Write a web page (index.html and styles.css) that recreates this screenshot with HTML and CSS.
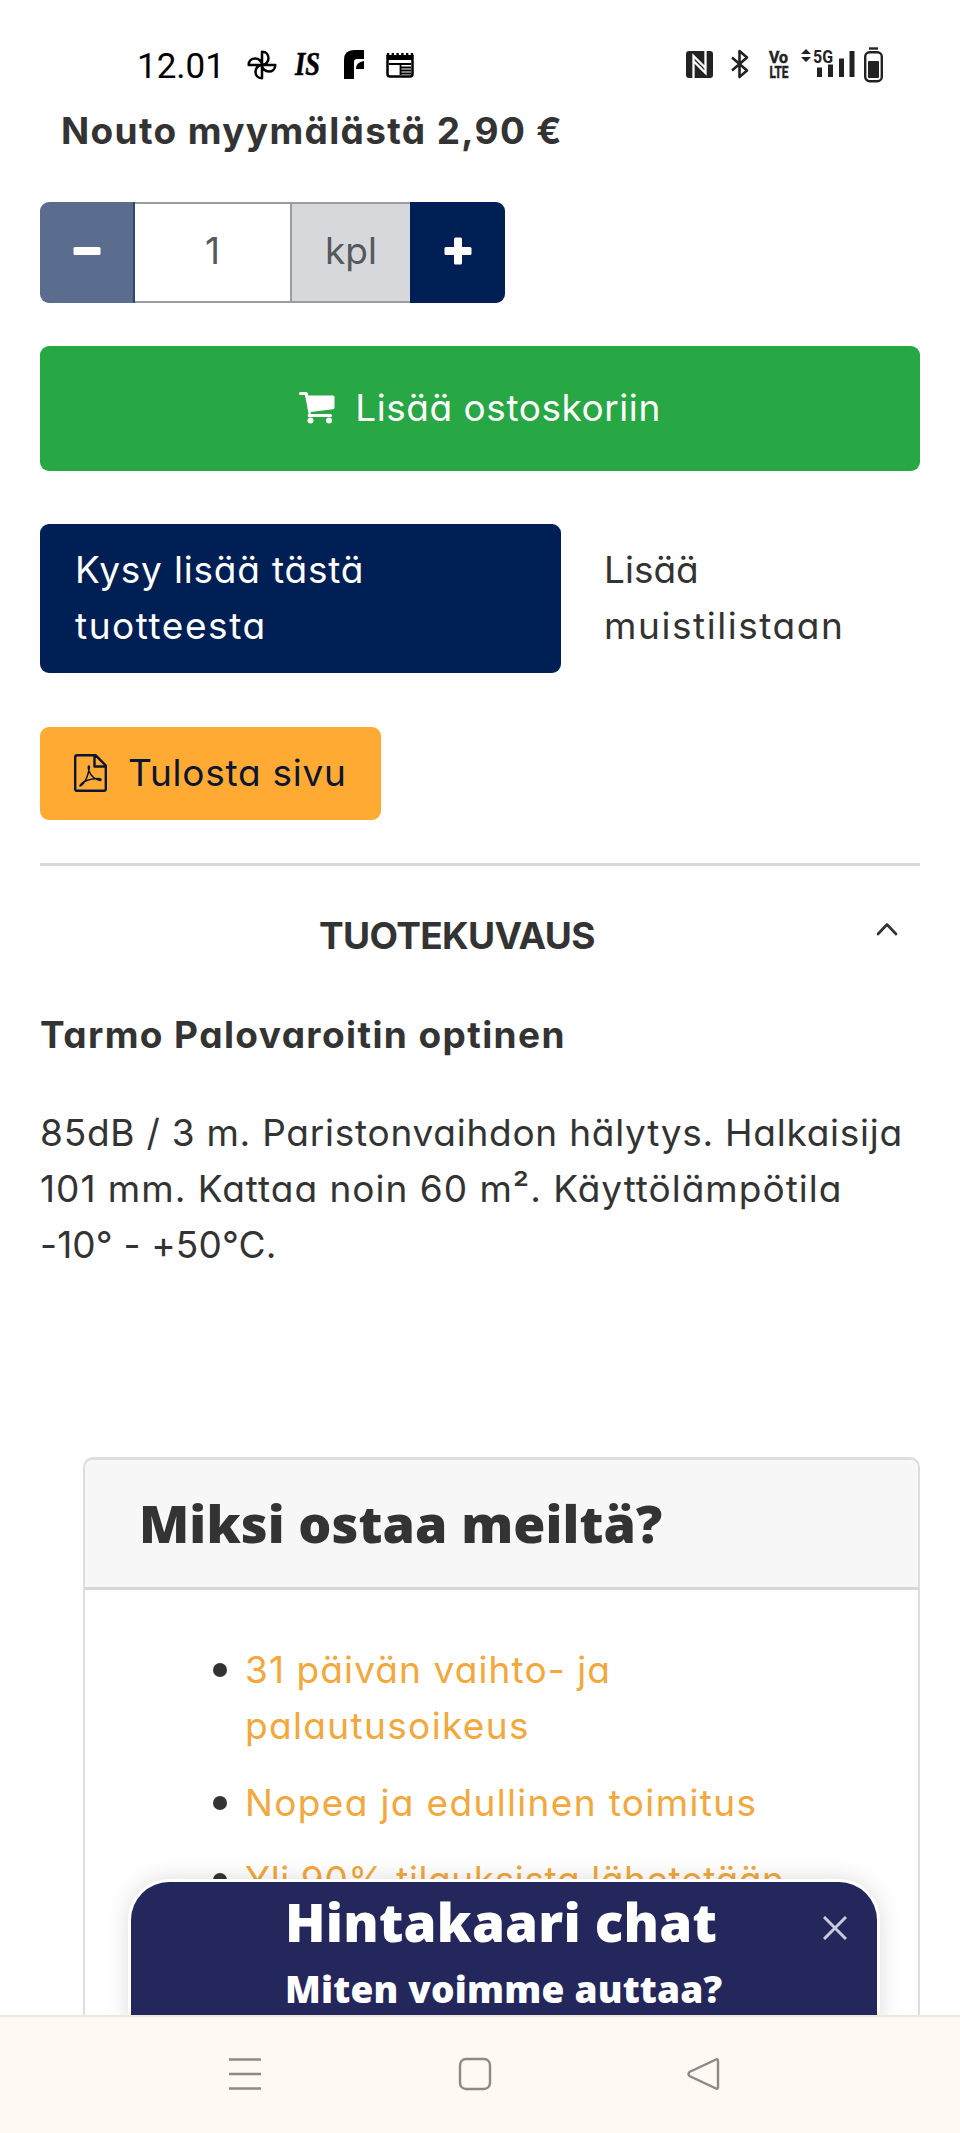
FILE: index.html
```html
<!DOCTYPE html>
<html lang="fi">
<head>
<meta charset="utf-8">
<title>Tarmo Palovaroitin optinen</title>
<link rel="stylesheet" href="styles.css">
</head>
<body>
<div class="screen">
  <header class="status">
    <span class="clock">12.01</span>
    <svg class="s-fan" width="30" height="30" viewBox="0 0 30 30" fill="none" stroke="#000" stroke-width="2.500" stroke-linejoin="round"><path d="M15 15V1.700C19.500 1.700 21.500 5 21.500 8.200C21.500 11.500 19 15 15 15ZM15 15H28.300C28.300 19.500 25 21.500 21.800 21.500C18.500 21.500 15 19 15 15ZM15 15V28.300C10.500 28.300 8.500 25 8.500 21.800C8.500 18.500 11 15 15 15ZM15 15H1.700C1.700 10.500 5 8.500 8.200 8.500C11.500 8.500 15 11 15 15Z"/></svg>
    <span class="s-is">IS</span>
    <svg class="s-f" width="20" height="29" viewBox="0 0 20 29"><path d="M0 29V10Q0 0 10 0H20V9H13Q10 9 10 12V29ZM12 19Q12 12 20 11V19Z"/></svg>
    <svg class="s-news" width="28" height="26" viewBox="0 0 28 26"><path d="M1.500 3V22Q1.500 24.500 4 24.500H24Q26.500 24.500 26.500 22V3" fill="none" stroke="#000" stroke-width="2.500"/><path d="M1 3H27V8H1Z"/><path d="M2 4V1M6.800 4V1M11.600 4V1M16.400 4V1M21.200 4V1M26 4V1" stroke="#000" stroke-width="2.400"/><path d="M3 12H25M14.500 12V23M14.500 15.500H25M14.500 18.500H25M14.500 21.500H25" stroke="#000" stroke-width="1.800"/></svg>
    <span class="spacer"></span>
    <svg class="s-nfc" width="27" height="27" viewBox="0 0 27 27"><rect width="27" height="27" rx="3" fill="#222"/><path d="M7.500 27V5L19 16.500M19.500 0V22L8 10.500" fill="none" stroke="#fff" stroke-width="2.300"/></svg>
    <svg class="s-bt" width="20" height="30" viewBox="0 0 20 30" fill="none" stroke="#222" stroke-width="2.600" stroke-linejoin="round"><path d="M2 8.500L17 21.500L9.500 28V2L17 8.500L2 21.500"/></svg>
    <svg class="s-volte" width="22" height="34" viewBox="0 0 22 34" fill="#222" stroke="#222" stroke-width=".5"><text x="1" y="14" textLength="19" lengthAdjust="spacingAndGlyphs">Vo</text><text x="1.500" y="28.500" textLength="19" lengthAdjust="spacingAndGlyphs">LTE</text></svg>
    <svg class="s-signal" width="54" height="30" viewBox="0 0 54 30" fill="#222"><path d="M0 6L5 1L10 6ZM0 9H10L5 14ZM16 19.500H21V29H16ZM27 16.500H32V29H27ZM38 10.500H43V29H38ZM48.500 3H53.500V29H48.500Z"/><text x="12" y="14.500" textLength="20" lengthAdjust="spacingAndGlyphs">5G</text></svg>
    <svg class="s-bat" width="19" height="36" viewBox="0 0 19 36"><rect x="1.200" y="5.200" width="16.600" height="29" rx="4.500" fill="none" stroke="#222" stroke-width="2.400"/><rect x="4" y="14" width="11" height="17" rx="1" fill="#222"/><path d="M5 1.500H14" stroke="#222" stroke-width="2.400"/></svg>
  </header>
  <main class="page">
    <p class="pickup">Nouto myymälästä 2,90 €</p>
    <div class="stepper">
      <button class="step minus"><svg width="28" height="28" viewBox="0 0 28 28"><rect x="0.500" y="10" width="27" height="8" rx="1.500" fill="#fff"/></svg></button>
      <span class="qty">1</span>
      <span class="unit">kpl</span>
      <button class="step plus"><svg width="28" height="28" viewBox="0 0 28 28" fill="#fff"><rect x="0.500" y="10" width="27" height="8" rx="1.500"/><rect x="10" y="0.500" width="8" height="27" rx="1.500"/></svg></button>
    </div>
    <button class="cart">
      <svg width="36" height="32" viewBox="0 0 36 32" fill="#fff"><path d="M1.500 0H7Q8.500 0 9 2L9.200 3.500H34Q35.500 3.500 35.500 5V15.500Q35.500 17 34 17.200L11.500 20L11.800 22H31.500Q33 22 33 23.500T31.500 25H10Q8.600 25 8.700 23.500L9.500 21.500L6 3H1.500Q0 3 0 1.500T1.500 0Z"/><circle cx="11.500" cy="28.500" r="3"/><circle cx="30" cy="28.500" r="3"/></svg>
      <span>Lisää ostoskoriin</span>
    </button>
    <div class="actions">
      <a class="ask">Kysy lisää tästä<br><span class="loose">tuotteesta</span></a>
      <a class="memo">Lisää<br><span class="loose">muistilistaan</span></a>
    </div>
    <button class="print">
      <svg width="33" height="38" viewBox="0 0 33 38" fill="none" stroke="#0b1633" stroke-width="2.400" stroke-linejoin="round"><path d="M3 1.200H21.500L31.800 11.500V35Q31.800 36.800 30 36.800H3Q1.200 36.800 1.200 35V3Q1.200 1.200 3 1.200ZM20.500 1.500V12.500H31.500"/><path d="M6 32Q12 29 14.500 18Q16 12 15 12Q13.500 12 15 17Q18 25 26.500 26.500Q28 25 25 24.500Q16 24.500 9.500 28Q6 30.500 6 32Z" stroke-width="1.500"/></svg>
      <span>Tulosta sivu</span>
    </button>
    <section class="desc">
      <h2><span>TUOTEKUVAUS</span><svg width="22" height="14" viewBox="0 0 22 14" fill="none" stroke="#333" stroke-width="2.700" stroke-linecap="round" stroke-linejoin="round"><path d="M2 12L11 2.500L20 12"/></svg></h2>
      <h3>Tarmo Palovaroitin optinen</h3>
      <p><span class="l1">85dB / 3 m. Paristonvaihdon hälytys. Halkaisija</span><br><span class="l2">101 mm. Kattaa noin 60 m². Käyttölämpötila</span><br><span class="l3">-10° - +50°C.</span></p>
    </section>
    <section class="card">
      <h2>Miksi ostaa meiltä?</h2>
      <ul>
        <li><a>31 päivän vaihto- ja<br><span class="wide">palautusoikeus</span></a></li>
        <li><a class="wide">Nopea ja edullinen toimitus</a></li>
        <li><a class="tight">Yli 90% tilauksista lähetetään</a></li>
      </ul>
    </section>
  </main>
  <aside class="chat">
    <div class="chat-text"><strong>Hintakaari chat</strong><b>Miten voimme auttaa?</b></div>
    <svg width="24" height="24" viewBox="0 0 24 24" stroke="#c9cadb" stroke-width="3" fill="none"><path d="M1 1L23 23M23 1L1 23"/></svg>
  </aside>
  <nav class="nav">
    <svg width="34" height="34" viewBox="0 0 34 34"><path d="M1 2.500H33M1 17H33M1 31.500H33"/></svg>
    <svg width="34" height="34" viewBox="0 0 34 34"><rect x="2" y="2" width="30" height="30" rx="6"/></svg>
    <svg width="34" height="34" viewBox="0 0 34 34"><path d="M29 2.500Q31 1.500 31 4V30Q31 32.500 29 31.500L2.500 19Q0.500 17 2.500 15Z"/></svg>
  </nav>
</div>
</body>
</html>
```
FILE: styles.css
```css
* { box-sizing: border-box; margin: 0; padding: 0; }
body { background: #fff; }
svg { flex: none; display: block; }
button { border: 0; font: inherit; color: inherit; letter-spacing: inherit; }
.screen { position: relative; width: 960px; height: 2133px; overflow: hidden; display: flex; flex-direction: column; background: #fefefe; color: #333; font: 400 37px/56px Inter, sans-serif; font-feature-settings: "cv11"; white-space: nowrap; }

.status { display: flex; align-items: flex-start; height: 103px; padding: 47px 77px 0 137px; color: #000; }
.clock { width: 110px; font: 400 35px/40px Roboto, sans-serif; }
.s-fan { margin-top: 3px; }
.s-is { width: 32px; margin: 2px 0 0 18px; font: italic 700 33px/30px "Liberation Serif", serif; transform: scaleX(.8); transform-origin: left; -webkit-text-stroke: .6px #000; }
.s-f { margin: 3px 0 0 17px; }
.s-news { margin: 5px 0 0 22px; }
.spacer { flex: 1; }
.s-nfc { margin: 4px 17px 0 0; }
.s-bt { margin: 2px 18px 0 0; }
.s-volte { margin: 2px 11px 0 0; font: 700 17px Roboto, sans-serif; }
.s-signal { margin: 1px 9px 0 0; font: 700 18px Roboto, sans-serif; }

.page { flex: 1; min-height: 0; overflow: hidden; padding: 0 40px; }
.pickup { padding-left: 21px; font-weight: 700; letter-spacing: 1.350px; }
.stepper { display: flex; width: 465px; height: 101px; margin-top: 43px; border-radius: 9px; overflow: hidden; color: #55595c; text-align: center; line-height: 93px; }
.step { width: 95px; padding-bottom: 3px; display: flex; align-items: center; justify-content: center; background: #001f54; }
.minus { background: #5b6d8f; border-right: 2px solid #2f466f; }
.qty { width: 155px; background: #fff; border: solid #999da3; border-width: 2px 0; }
.unit { width: 120px; background: #d7d8dc; border: solid #999da3; border-width: 2px 0 2px 2px; }
.cart { display: flex; align-items: center; justify-content: center; width: 880px; height: 125px; margin-top: 43px; padding-bottom: 2px; border-radius: 9px; background: #28a745; color: #fff; gap: 20px; letter-spacing: .550px; }
.actions { display: flex; margin-top: 53px; gap: 43px; }
.ask { width: 521px; height: 149px; padding: 18px 35px; border-radius: 9px; background: #001f54; color: #fff; letter-spacing: .800px; }
.memo { padding-top: 18px; }
.loose { letter-spacing: 1.550px; }
.print { display: flex; align-items: center; gap: 21px; width: 341px; height: 93px; margin-top: 54px; padding: 0 0 2px 34px; border-radius: 9px; background: #ffab33; color: #0b1633; letter-spacing: .750px; }

.desc { margin-top: 43px; border-top: 3px solid #d8d8d8; padding-top: 42px; }
.desc h2 { display: flex; padding: 0 22px 0 279px; justify-content: space-between; font-size: 37px; letter-spacing: -.650px; }
.desc h2 svg { margin-top: 14px; }
.desc h3 { margin-top: 43px; font-size: 37px; letter-spacing: 1.400px; }
.desc p { margin-top: 42px; }
.l1 { letter-spacing: .750px; }
.l2 { letter-spacing: 1px; }
.l3 { letter-spacing: .150px; }

.card { width: 837px; height: 700px; margin: 184px 0 0 43px; border: solid #dedede; border-width: 3px 2px; border-radius: 10px; overflow: hidden; }
.card h2 { height: 130px; padding: 32px 54px; background: #f7f7f7; border-bottom: 3px solid #d8d8d8; font: 800 52px/62px "Open Sans", sans-serif; letter-spacing: .100px; }
.card ul { list-style: none; padding: 52px 0 0 160px; color: #f2a83b; letter-spacing: 1.100px; }
.card li { display: flex; margin-bottom: 21px; }
.card li::before { content: ""; width: 14px; height: 14px; border-radius: 50%; background: #333; margin: 21px 18px 0 -32px; }
.wide { letter-spacing: 1.350px; }
.tight { letter-spacing: .600px; }

.chat { position: absolute; left: 131px; top: 1882px; width: 746px; height: 140px; border-radius: 38px 38px 0 0; background: #24275c; color: #fff; box-shadow: 0 0 0 3px #fff, 0 0 22px 2px rgba(0,0,0,.14); }
.chat-text { display: flex; flex-direction: column; align-items: flex-start; padding: 9px 0 0 154px; font-family: "Open Sans", sans-serif; }
.chat strong { font-weight: 800; font-size: 53px; line-height: 62px; letter-spacing: .200px; }
.chat b { font-weight: 800; font-size: 37px; line-height: 50px; margin-top: 11px; letter-spacing: .200px; }
.chat svg { position: absolute; right: 30px; top: 34px; }
.nav { position: relative; display: flex; height: 118px; padding: 40px 239px 0 228px; justify-content: space-between; background: #fef9f2; border-top: 2px solid #efe9dc; }
.nav svg { fill: none; stroke: #8d8984; stroke-width: 2.400; }
```
